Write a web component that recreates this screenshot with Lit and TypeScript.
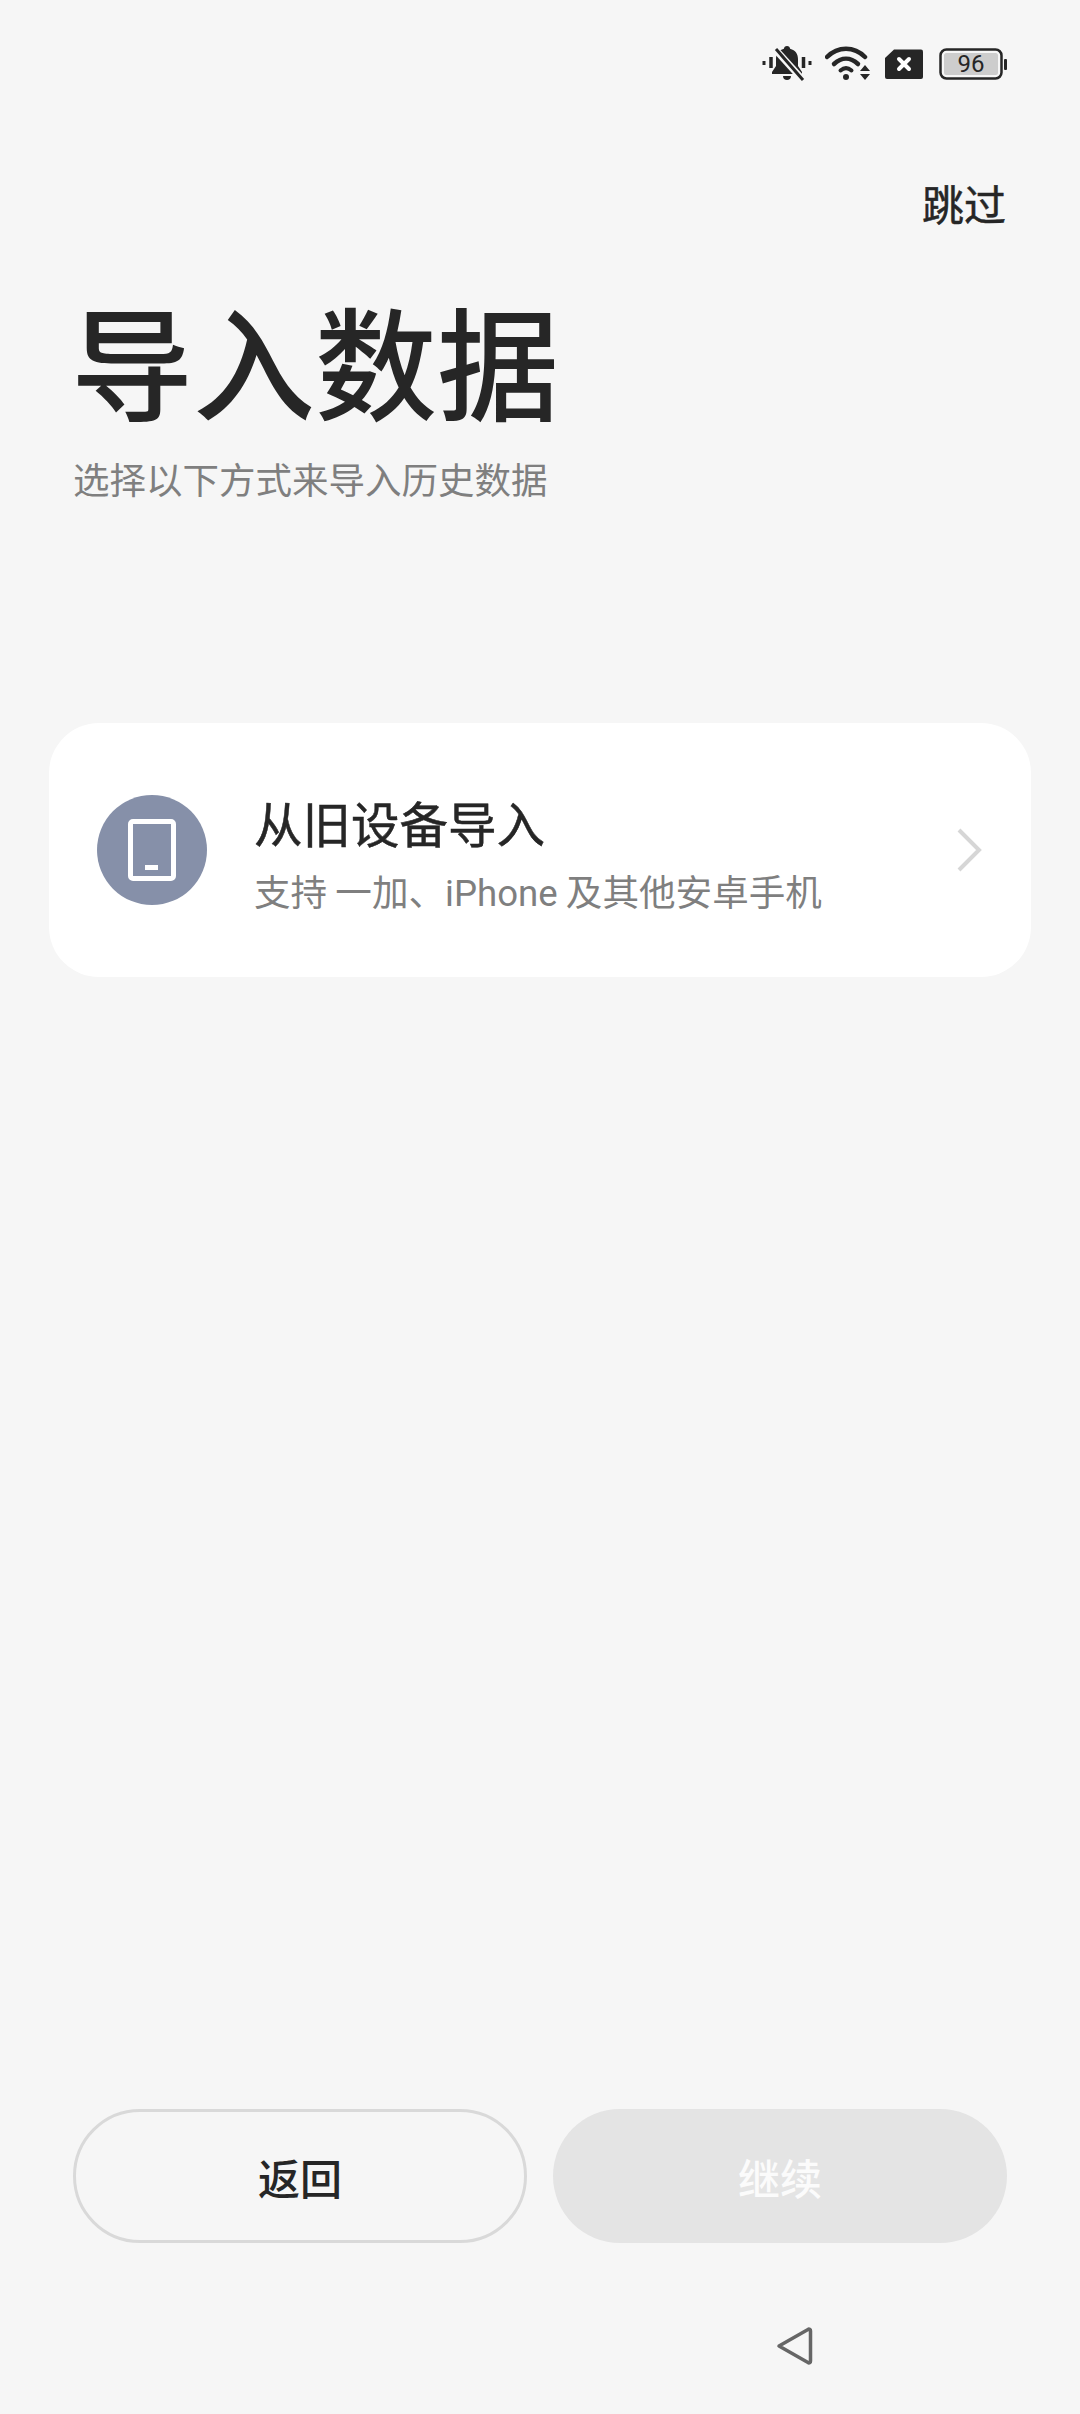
import { LitElement, html, css } from "lit";
import { customElement } from "lit/decorators.js";

@customElement("app-root")
export class AppRoot extends LitElement {
  static styles = css`
    :host {
      display: block;
      width: 1080px;
      height: 2414px;
      background: #f6f6f6;
      font-family: "Noto Sans CJK SC", Roboto, sans-serif;
      color: #262626;
      overflow: hidden;
    }
    .page { display: flex; flex-direction: column; height: 2414px; }
    .status {
      height: 36px;
      margin-top: 46px;
      padding-right: 73px;
      display: flex;
      justify-content: flex-end;
      align-items: center;
    }
    .status svg { display: block; flex: none; }
    .bell { margin-right: 13px; }
    .wifi { margin-right: 14px; }
    .sim { margin-right: 16px; }
    .battery { position: relative; width: 68px; height: 32px; }
    .batnum {
      position: absolute; left: 0; top: 0; width: 64px; height: 32px;
      font: 24px/32px Roboto, sans-serif; text-align: center; color: #262626;
    }
    .skip {
      margin-top: 96px;
      padding-right: 74px;
      text-align: right;
      font-size: 42px;
      line-height: 50px;
      -webkit-text-stroke: 0.5px #262626;
    }
    .title {
      margin: 60px 0 0 71px;
      font-size: 122px;
      line-height: 140px;
      font-weight: 500;
    }
    .sub {
      margin: 26px 0 0 73px;
      font-size: 36.5px;
      line-height: 50px;
      color: #7f7f7f;
    }
    .card {
      margin: 219px 49px 0;
      height: 254px;
      border-radius: 50px;
      background: #fff;
      display: flex;
      align-items: center;
      padding: 0 48px 0 48px;
    }
    .circle {
      width: 110px; height: 110px; border-radius: 50%;
      background: #8690a9;
      display: flex; align-items: center; justify-content: center;
      flex: none;
    }
    .text { margin-left: 47px; flex: 1; padding-top: 16px; }
    .ct {
      font-size: 48.500px; line-height: 60px; margin-top: -6px;
      -webkit-text-stroke: 0.5px #262626;
    }
    .cs { font-size: 36.6px; line-height: 48px; margin-top: 15px; color: #7f7f7f; }
    .cs .latin { font-family: Roboto, sans-serif; }
    .spacer { flex: 1; }
    .buttons {
      display: flex; gap: 26px; padding: 0 73px;
    }
    .btn {
      width: 454px; height: 134px; box-sizing: border-box; border-radius: 67px;
      display: flex; align-items: center; justify-content: center;
      font-size: 42px; font-weight: 500;
    }
    .back { border: 3px solid #d9d9d9; color: #262626; }
    .next { background: #e4e4e4; color: #fbfbfb; }
    .nav {
      height: 171px;
      display: flex; justify-content: flex-start;
      padding: 0 0 0 775px;
    }
    .nav svg { margin-top: 83px; }
  `;

  render() {
    return html`<div class="page">
      <div class="status">
        <svg class="bell" width="50" height="36" viewBox="0 0 50 36">
          <path d="M25 0c1.800 0 3 1.200 3.100 2.800 5.400 1.400 7.900 5.200 7.900 10.200v7l4 6v2H10v-2l4-6v-7c0-5 2.500-8.800 7.900-10.200C22 1.200 23.200 0 25 0z" fill="#262626"/>
          <path d="M21 30h8c0 2.400-1.600 4-4 4s-4-1.600-4-4z" fill="#262626"/>
          <path d="M11 1l30 33" stroke="#f6f6f6" stroke-width="7"/>
          <path d="M14 3l27 31" stroke="#262626" stroke-width="3"/>
          <path d="M9 11v11M41.500 11v11" stroke="#262626" stroke-width="3.500"/>
          <path d="M2 15v4M48 15v4" stroke="#262626" stroke-width="3"/>
        </svg>
        <svg class="wifi" width="46" height="36" viewBox="0 0 46 36">
          <path d="M2 11C13 0 29 0 40 11" fill="none" stroke="#262626" stroke-width="4.500" stroke-linecap="round"/>
          <path d="M9 18c7.500-7 16.500-7 24 0" fill="none" stroke="#262626" stroke-width="4.500" stroke-linecap="round"/>
          <path d="M15.500 24.500c3.500-3 7.500-3 11 0" fill="none" stroke="#262626" stroke-width="4" stroke-linecap="round"/>
          <circle cx="21" cy="31" r="3" fill="#262626"/>
          <path d="M40 19l5 6H35zM35 28h10l-5 6z" fill="#262626"/>
        </svg>
        <svg class="sim" width="38" height="30" viewBox="0 0 38 30">
          <path d="M9 0.500H36a2 2 0 0 1 2 2V28a2 2 0 0 1-2 2H2a2 2 0 0 1-2-2V9z" fill="#262626"/>
          <path d="M14 10l10 10M24 10L14 20" stroke="#fff" stroke-width="4" stroke-linecap="round"/>
        </svg>
        <div class="battery">
          <svg width="68" height="32" viewBox="0 0 68 32">
            <rect x="1.500" y="1.500" width="61" height="29" rx="6" fill="none" stroke="#262626" stroke-width="2.500"/>
            <rect x="5" y="5" width="54" height="22" rx="2.500" fill="#cdcdcd"/>
            <rect x="65" y="11" width="3" height="11" rx="1" fill="#262626"/>
          </svg>
          <div class="batnum">96</div>
        </div>
      </div>
      <div class="skip">跳过</div>
      <div class="title">导入数据</div>
      <div class="sub">选择以下方式来导入历史数据</div>
      <div class="card">
        <div class="circle">
          <svg width="48" height="62" viewBox="0 0 48 62">
            <rect x="2.500" y="2.500" width="43" height="57" rx="2.500" fill="none" stroke="#fff" stroke-width="5"/>
            <rect x="17" y="46" width="13" height="5" fill="#fff"/>
          </svg>
        </div>
        <div class="text">
          <div class="ct">从旧设备导入</div>
          <div class="cs">支持 一加、<span class="latin">iPhone</span> 及其他安卓手机</div>
        </div>
        <svg width="28" height="46" viewBox="0 0 28 46">
          <path d="M4 3l20 20L4 43" fill="none" stroke="#d6d6d6" stroke-width="4"/>
        </svg>
      </div>
      <div class="spacer"></div>
      <div class="buttons">
        <div class="btn back">返回</div>
        <div class="btn next">继续</div>
      </div>
      <div class="nav">
        <svg width="40" height="40" viewBox="0 0 40 40">
          <path d="M4 20L33 3.500a1.500 1.500 0 0 1 2.500 1.300V35.200a1.500 1.500 0 0 1-2.500 1.300z" fill="none" stroke="#666" stroke-width="3.500" stroke-linejoin="round"/>
        </svg>
      </div>
    </div>`;
  }
}
